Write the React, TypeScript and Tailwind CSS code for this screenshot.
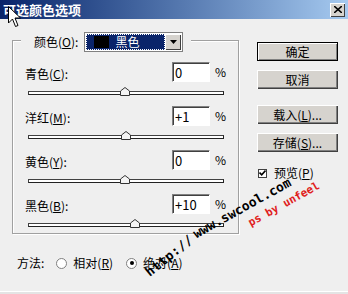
import React from "react";

const ROWS = [
  { name: "青色", key: "C", value: "0", pos: 96 },
  { name: "洋红", key: "M", value: "+1", pos: 97 },
  { name: "黄色", key: "Y", value: "0", pos: 96 },
  { name: "黑色", key: "B", value: "+10", pos: 106 },
];

const font = { fontFamily: '"Noto Sans CJK SC", "Liberation Sans", sans-serif' };
const mono = { fontFamily: '"DejaVu Sans Mono", monospace' };

function Label({ name, k }: { name: string; k: string }) {
  return (
    <span className="text-[12px] leading-none text-black">
      {name}(<span className="underline">{k}</span>):
    </span>
  );
}

function Slider({ pos }: { pos: number }) {
  return (
    <div className="relative ml-[15px] h-[4px] w-[196px] border border-t-[#404040] border-l-[#404040] border-b-[#222] border-r-[#222] bg-white">
      <svg
        className="absolute top-[-5px]"
        style={{ left: pos - 5 }}
        width="10"
        height="9"
        viewBox="0 0 10 9"
      >
        <path d="M0.5 8.5 V4 L5 0.5 L9.5 4 V8.5 Z" fill="#f4f4f4" stroke="#333" />
      </svg>
    </div>
  );
}

function Button({ children, primary }: { children: React.ReactNode; primary?: boolean }) {
  return (
    <div
      className={`flex h-[19px] w-[81px] items-center justify-center bg-[#d6d3ce] text-[12px] text-black ${
        primary
          ? "border border-black shadow-[inset_1px_1px_0_#fff,inset_-1px_-1px_0_#808080]"
          : "shadow-[inset_1px_1px_0_#fff,inset_-1px_-1px_0_#404040,inset_-2px_-2px_0_#808080]"
      }`}
    >
      {children}
    </div>
  );
}

export default function App() {
  return (
    <div className="relative h-[294px] w-[348px] overflow-hidden bg-[#efefef]" style={font}>
      {/* title bar */}
      <div className="flex h-[19px] items-center justify-between bg-gradient-to-r from-[#0a246a] to-[#a6caf0] pl-[3px] pr-[3px]">
        <span className="text-[13px] font-bold leading-none text-white">可选颜色选项</span>
        <div className="flex h-[14px] w-[15px] items-center justify-center bg-[#d6d3ce] shadow-[inset_1px_1px_0_#fff,inset_-1px_-1px_0_#404040]">
          <svg width="8" height="7" viewBox="0 0 8 7">
            <path d="M0 0 L8 7 M8 0 L0 7" stroke="#000" strokeWidth="1.6" />
          </svg>
        </div>
      </div>

      <div className="flex items-start">
        {/* group */}
        <div className="ml-[12px] mt-[21px] h-[194px] w-[227px] shrink-0 border border-[#a0a0a0] shadow-[1px_1px_0_#fff,inset_1px_1px_0_#fff]">
          <div className="-mt-[9px] ml-[8px] flex w-fit items-center bg-[#efefef] pl-[13px] pr-[8px]">
            <Label name="颜色" k="O" />
            <div className="ml-[6px] flex h-[20px] w-[99px] items-center border border-[#808080] bg-white p-[1px]">
              <div className="flex h-full flex-1 items-center border border-dotted border-white bg-[#0a246a]">
                <div className="ml-[7px] h-[12px] w-[15px] bg-black" />
                <span className="ml-[6px] text-[12px] leading-none text-white">黑色</span>
              </div>
              <div className="flex h-full w-[16px] items-center justify-center bg-[#d6d3ce] shadow-[inset_1px_1px_0_#fff,inset_-1px_-1px_0_#404040]">
                <svg width="7" height="4" viewBox="0 0 7 4">
                  <path d="M0 0 H7 L3.5 4 Z" fill="#000" />
                </svg>
              </div>
            </div>
          </div>

          <div className="mt-[10px] flex flex-col">
            {ROWS.map((r, i) => (
              <div key={r.name} className={i === 0 ? "" : "mt-[11px]"}>
                <div className="flex h-[20px] items-center">
                  <span className="ml-[12px] w-[147px]">
                    <Label name={r.name} k={r.key} />
                  </span>
                  <div className="flex h-[20px] w-[38px] items-center border border-t-[#808080] border-l-[#808080] border-b-white border-r-white bg-white pl-[2px] text-[13px] leading-none text-black shadow-[inset_1px_1px_0_#404040]">
                    {r.value}
                  </div>
                  <span className="ml-[5px] text-[12px] leading-none text-black">%</span>
                </div>
                <div className="mt-[9px]">
                  <Slider pos={r.pos} />
                </div>
              </div>
            ))}
          </div>
        </div>

        {/* buttons */}
        <div className="ml-[18px] mt-[23px] flex flex-col">
          <Button primary>确定</Button>
          <div className="mt-[9px]">
            <Button>取消</Button>
          </div>
          <div className="mt-[16px]">
            <Button>
              载入(<span className="underline">L</span>)...
            </Button>
          </div>
          <div className="mt-[9px]">
            <Button>
              存储(<span className="underline">S</span>)...
            </Button>
          </div>
          <div className="mt-[15px] flex items-center">
            <div className="ml-[1px] flex h-[9px] w-[9px] items-center justify-center border border-[#404040] bg-white">
              <svg width="7" height="6" viewBox="0 0 7 6">
                <path d="M0.5 2.5 L2.7 4.8 L6.5 0.6" stroke="#000" strokeWidth="1.6" fill="none" />
              </svg>
            </div>
            <span className="ml-[7px] text-[12px] leading-none text-black">
              预览(<span className="underline">P</span>)
            </span>
          </div>
        </div>
      </div>

      {/* method */}
      <div className="ml-[17px] mt-[23px] flex items-center text-[12px] leading-none text-black">
        <span>方法:</span>
        <div className="ml-[12px] h-[11px] w-[11px] rounded-full border border-[#808080] bg-white" />
        <span className="ml-[6px]">
          相对(<span className="underline">R</span>)
        </span>
        <div className="ml-[13px] flex h-[11px] w-[11px] items-center justify-center rounded-full border border-[#808080] bg-white">
          <div className="h-[4px] w-[4px] rounded-full bg-black" />
        </div>
        <span className="ml-[6px]">
          绝对(<span className="underline">A</span>)
        </span>
      </div>

      <div className="absolute bottom-0 left-0 h-[3px] w-full border-t border-white bg-[#e4e4e4]" />

      {/* watermark, follows a slight curve */}
      <div
        className="pointer-events-none absolute left-[147px] top-[267px] origin-left -rotate-[39deg] whitespace-nowrap text-[13px] font-bold leading-none tracking-[0.3px] text-black"
        style={mono}
      >
        http://
      </div>
      <div
        className="pointer-events-none absolute left-[194px] top-[228px] origin-left -rotate-[29deg] whitespace-nowrap text-[13px] font-bold leading-none text-black"
        style={mono}
      >
        www.swcool.com
      </div>
      <div
        className="pointer-events-none absolute left-[249px] top-[218px] origin-left -rotate-[29deg] whitespace-nowrap text-[11px] font-bold leading-none text-[#e02020]"
        style={mono}
      >
        ps by unfeel
      </div>

      {/* cursor */}
      <svg className="absolute left-[8px] top-[6px]" width="13" height="22" viewBox="0 0 13 22">
        <path d="M0.5 0.5 V17 L4.5 13 L7.5 20.5 L10 19.5 L7 12 H12.5 Z" fill="#fff" stroke="#000" />
      </svg>
    </div>
  );
}
